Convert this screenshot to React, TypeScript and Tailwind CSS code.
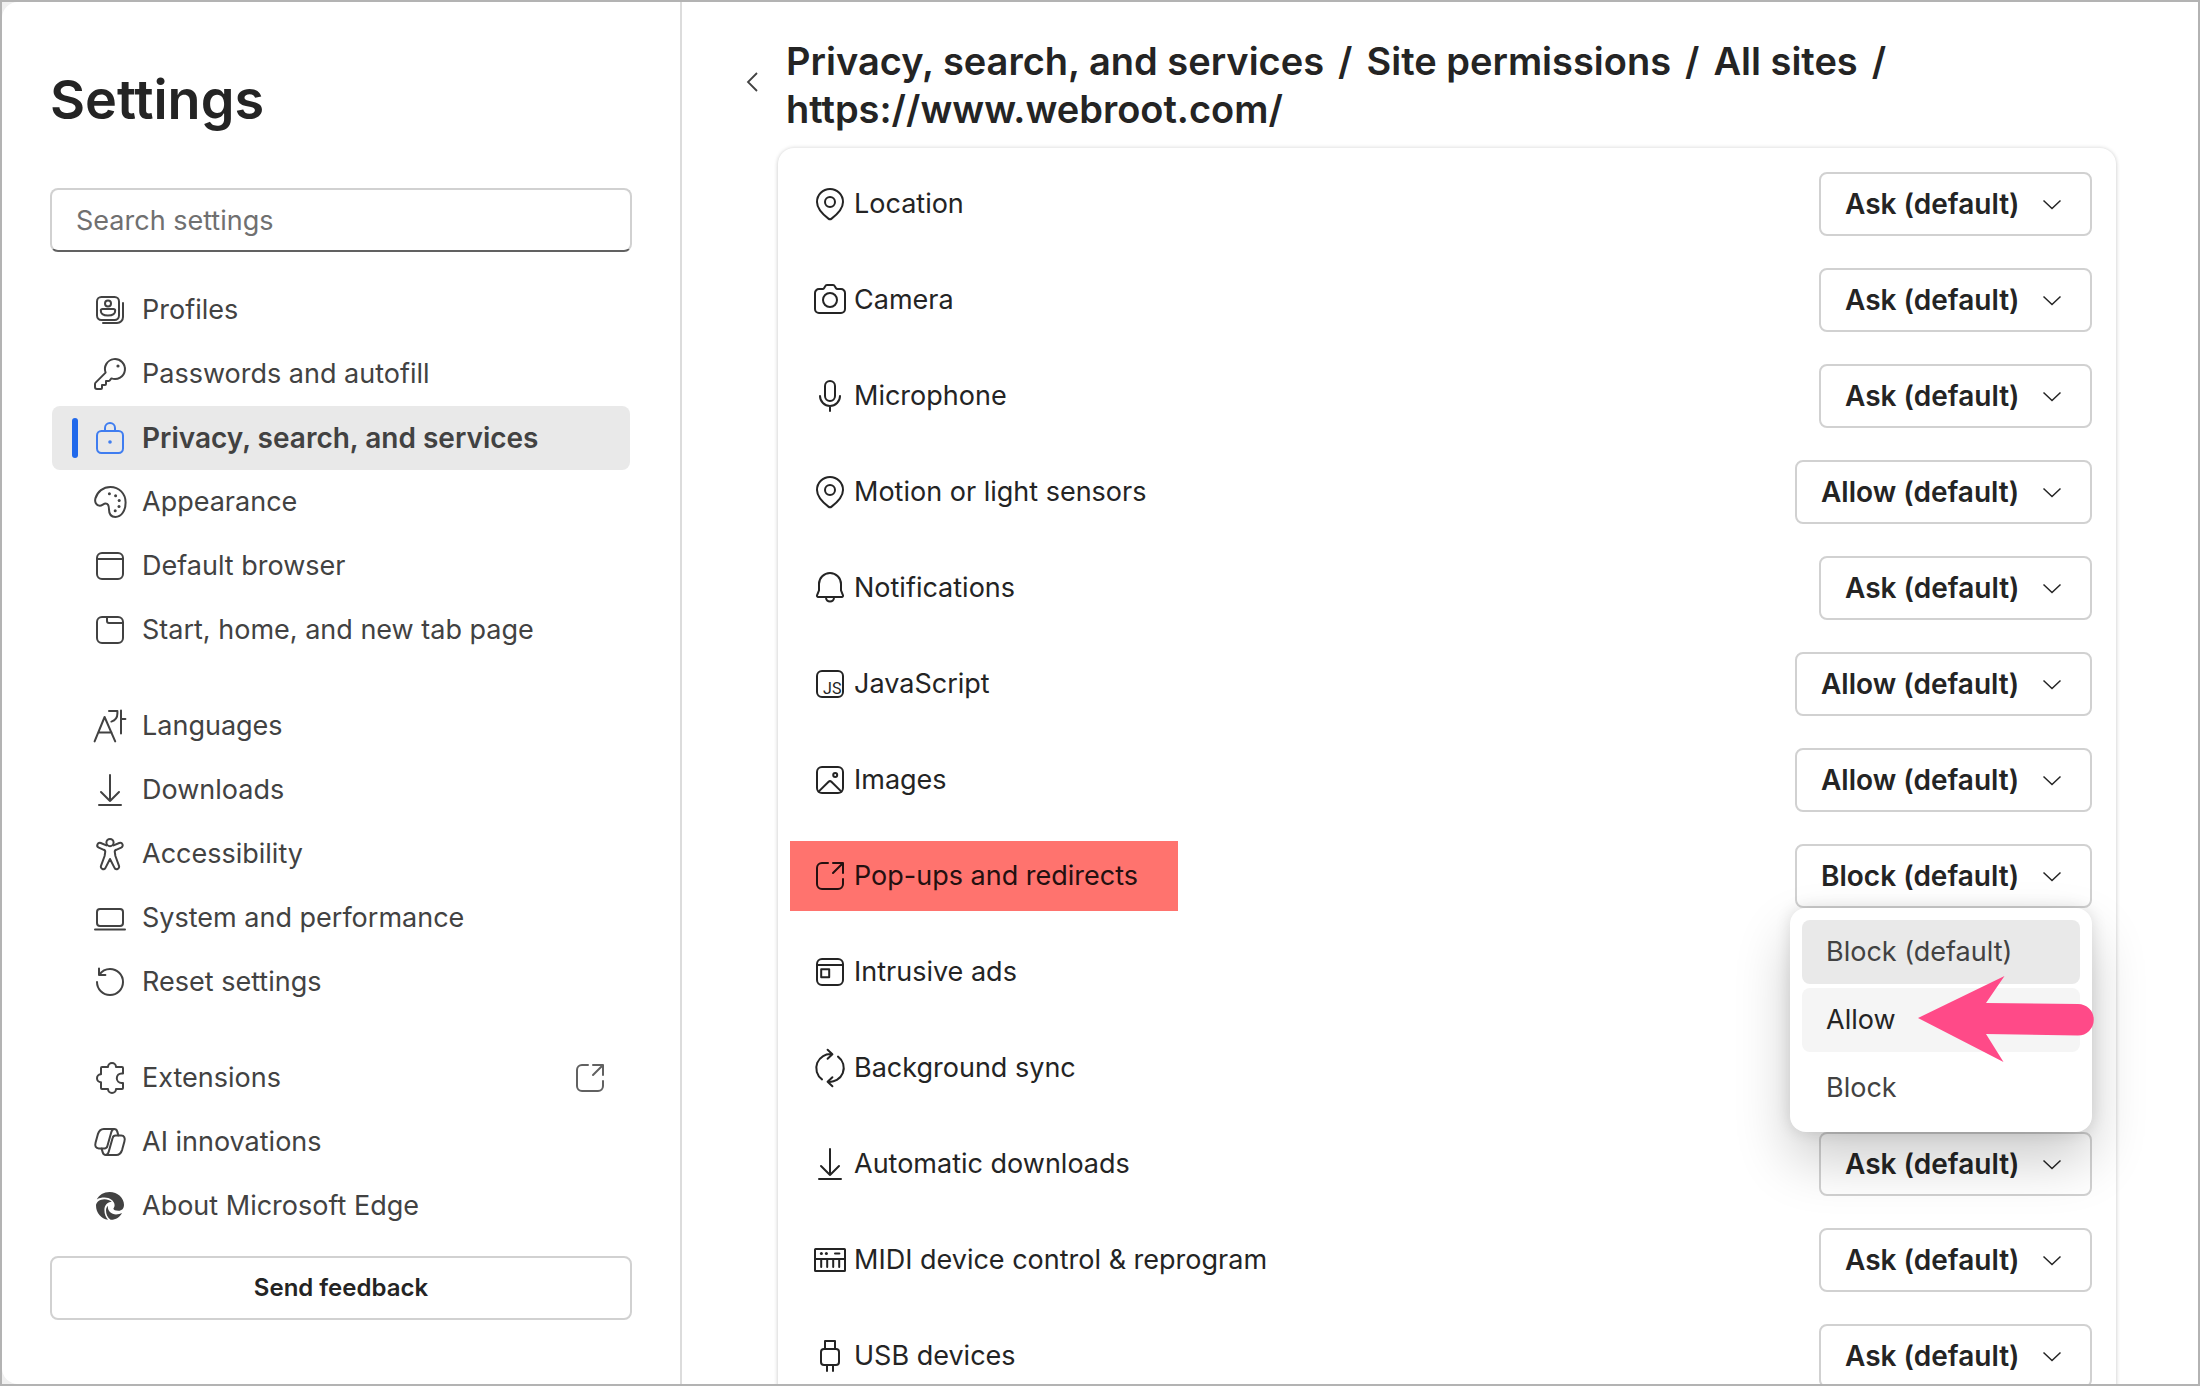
import { useState } from "react";
import type { ReactNode } from "react";

function Icon({ children, className = "" }: { children: ReactNode; className?: string }) {
  return (
    <svg
      aria-hidden="true"
      viewBox="0 0 20 20"
      className={`size-10 shrink-0 ${className}`}
      fill="none"
      stroke="currentColor"
      strokeWidth="1"
      strokeLinecap="round"
      strokeLinejoin="round"
    >
      {children}
    </svg>
  );
}

const frame = <rect x="3.5" y="3.5" width="13" height="13" rx="2.5" />;

const pin = (
  <>
    <path d="M10 2.5A6.5 6.5 0 0 0 3.5 9c0 3.4 2.7 6 5.7 8.3a1.3 1.3 0 0 0 1.6 0c3-2.3 5.7-4.9 5.7-8.3A6.5 6.5 0 0 0 10 2.5z" />
    <circle cx="10" cy="9" r="2.5" />
  </>
);

const openExternal = (
  <path d="M9 3.5H6A2.5 2.5 0 0 0 3.5 6v8A2.5 2.5 0 0 0 6 16.5h8a2.5 2.5 0 0 0 2.5-2.5v-2.5M11.5 3.5h5v5M16.5 3.5l-5 5" />
);

const download = <path d="M10 2.5v13M5.5 11l4.5 4.5 4.5-4.5M4.5 17.5h11" />;

const syncArrow = <path d="M6 15.7A7 7 0 0 1 11 3.1M8.8.9l2.4 2.2-2.4 2.3" />;

const ribbon = (
  <path d="M12.1 3.5H6.9C5.2 3.5 4.4 4.5 3.9 6.2L2.8 10.3c-.5 1.8.1 2.9 1.6 2.9h2.8c.8 0 1.3-.4 1.5-1.2l1.9-6.8c.3-1.1.8-1.7 1.5-1.7.8 0 1.3.4 1.5 1.2l.6 2" />
);

type NavItem = { label: string; icon: ReactNode; active?: boolean; external?: boolean };

const navGroups: NavItem[][] = [
  [
    {
      label: "Profiles",
      icon: (
        <>
          <rect x="3.5" y="3.5" width="11" height="11.5" rx="2.2" />
          <path d="M16.5 6.5v7a3 3 0 0 1-3 3H6.5" />
          <circle cx="9" cy="6.8" r="1.5" />
          <path d="M6.3 9.5h5.4a.9.9 0 0 1 .9.9c0 1.5-1.5 2.4-3.6 2.4s-3.6-.9-3.6-2.4a.9.9 0 0 1 .9-.9z" />
        </>
      ),
    },
    {
      label: "Passwords and autofill",
      icon: (
        <>
          <path d="M10.7 12.2A5 5 0 1 0 7.8 9.3L2.8 14.3a1 1 0 0 0-.3.7v1.5a1 1 0 0 0 1 1H5.5a.5.5 0 0 0 .5-.5v-1.5h1.5A.5.5 0 0 0 8 15v-1.5h1.3a.7.7 0 0 0 .5-.2z" />
          <circle cx="14" cy="6" r=".8" fill="currentColor" stroke="none" />
        </>
      ),
    },
    {
      label: "Privacy, search, and services",
      active: true,
      icon: (
        <>
          <rect x="3.5" y="6.5" width="13" height="11" rx="2.2" />
          <path d="M7.5 6.5V5a2.5 2.5 0 0 1 5 0v1.5" />
          <circle cx="10" cy="12" r=".9" fill="currentColor" stroke="none" />
        </>
      ),
    },
    {
      label: "Appearance",
      icon: (
        <>
          <path d="M2.7 8.2C3.7 4.8 6.6 2.5 10.2 2.5c4.3 0 7.6 3.3 7.6 7.7 0 4.1-2.1 7.3-5.1 7.3-2.4 0-3.2-1.9-3.2-3.7 0-1.4-.3-3-1.7-3-1.1 0-1.7 1.1-2.9 1.1-1.7 0-2.7-1.8-2.2-3.7z" />
          <g fill="currentColor" stroke="none">
            <circle cx="9.7" cy="5.9" r=".75" />
            <circle cx="12.8" cy="6.9" r=".75" />
            <circle cx="14.6" cy="9.2" r=".75" />
            <circle cx="14.5" cy="12.2" r=".75" />
            <circle cx="12.6" cy="14.4" r=".75" />
          </g>
        </>
      ),
    },
    {
      label: "Default browser",
      icon: (
        <>
          {frame}
          <path d="M3.5 6.5h13" />
        </>
      ),
    },
    {
      label: "Start, home, and new tab page",
      icon: (
        <>
          {frame}
          <path d="M8.5 3.5v2a1 1 0 0 0 1 1h7" />
        </>
      ),
    },
  ],
  [
    {
      label: "Languages",
      icon: (
        <path d="M2.3 17.7 7.3 5.5l5.3 12.2M4.1 13.3h6.7M9.5 2.5h4.2v1.3c0 1.9-1 3.4-3 4M15.5 2.3v11.5M15.5 6.5h2.2" />
      ),
    },
    { label: "Downloads", icon: download },
    {
      label: "Accessibility",
      icon: (
        <>
          <circle cx="10" cy="4.3" r="1.8" />
          <path d="M8.2 5.7 5.4 4.5a1.25 1.25 0 0 0-1 2.3l2.5 1.1c.5.2.8.7.7 1.2L7.3 11l-1.8 4.9a1.2 1.2 0 0 0 2.3.9L10 12.5l2.2 4.3a1.2 1.2 0 0 0 2.3-.9L12.7 11l-.3-1.9c-.1-.5.2-1 .7-1.2l2.5-1.1a1.25 1.25 0 0 0-1-2.3l-2.8 1.2" />
        </>
      ),
    },
    {
      label: "System and performance",
      icon: (
        <>
          <rect x="3.5" y="5.5" width="13" height="8.5" rx="1.5" />
          <path d="M2.5 15.7h15" />
        </>
      ),
    },
    {
      label: "Reset settings",
      icon: <path d="M3.5 10A6.5 6.5 0 1 0 10 3.5a6.5 6.5 0 0 0-5.3 2.8M4.5 3.3v3.2h3.2" />,
    },
  ],
  [
    {
      label: "Extensions",
      external: true,
      icon: (
        <path d="M6 4.5h3a2 2 0 0 1 4 0h3a.5.5 0 0 1 .5.5v2.7h-.7a2.4 2.4 0 0 0 0 4.8h.7V15a.5.5 0 0 1-.5.5h-3a2 2 0 0 1-4 0H6a.5.5 0 0 1-.5-.5v-2.9a2 2 0 0 1 0-4V5a.5.5 0 0 1 .5-.5z" />
      ),
    },
    {
      label: "AI innovations",
      icon: (
        <>
          {ribbon}
          <g transform="rotate(180 10 10)">{ribbon}</g>
        </>
      ),
    },
    {
      label: "About Microsoft Edge",
      icon: (
        <g fill="currentColor" stroke="none">
          <path d="M3.4 6.8C4.4 4.5 6.9 3 9.8 3 13.8 3 17 6 17 9.4c0 1.9-1 3-2.8 3-1.4 0-2.5-.4-2.5-1 0-.4.6-.8.6-1.8 0-2.1-2.5-3.8-5-3.8-1.5 0-2.9.3-3.9 1z" />
          <path d="M3 9.8c0-1.8 2-3.2 4.2-3.2 1.4 0 2.8.4 3.7 1.3C8.6 8 7.2 9.8 7.2 12c0 2 .7 3.7 1.8 4.9-3.4-.4-6-3.4-6-7.1z" />
          <path d="M9 9.9c-.5 2.6 1.8 4.3 4 4.3 1.2 0 2.2-.3 3-.7-1.1 2.1-3.2 3.5-5.7 3.4C8.8 15.7 8 14 8 12.2c0-.9.4-1.8 1-2.3z" />
        </g>
      ),
    },
  ],
];

type Permission = { label: string; value: string; icon: ReactNode; highlighted?: boolean; open?: boolean };

const permissions: Permission[] = [
  { label: "Location", value: "Ask (default)", icon: pin },
  {
    label: "Camera",
    value: "Ask (default)",
    icon: (
      <>
        <path d="M4.5 4.5h1.7a1 1 0 0 0 .9-.5l.5-.9a1 1 0 0 1 .9-.6h3a1 1 0 0 1 .9.6l.5.9a1 1 0 0 0 .9.5h1.7a2 2 0 0 1 2 2v8a2 2 0 0 1-2 2h-11a2 2 0 0 1-2-2v-8a2 2 0 0 1 2-2z" />
        <circle cx="10" cy="10" r="3.5" />
      </>
    ),
  },
  {
    label: "Microphone",
    value: "Ask (default)",
    icon: (
      <>
        <rect x="7.5" y="2.5" width="5" height="10" rx="2.5" />
        <path d="M5 10a5 5 0 0 0 10 0M10 15v2.5" />
      </>
    ),
  },
  { label: "Motion or light sensors", value: "Allow (default)", icon: pin },
  {
    label: "Notifications",
    value: "Ask (default)",
    icon: (
      <path d="M10 2.5A5.5 5.5 0 0 0 4.5 8v3.2l-1 2.5a.6.6 0 0 0 .6.8h11.8a.6.6 0 0 0 .6-.8l-1-2.5V8A5.5 5.5 0 0 0 10 2.5zM8 14.8a2 2 0 0 0 4 0" />
    ),
  },
  {
    label: "JavaScript",
    value: "Allow (default)",
    icon: (
      <>
        {frame}
        <text
          x="15.7"
          y="14.8"
          textAnchor="end"
          fontSize="8"
          fontFamily="Roboto, sans-serif"
          fill="currentColor"
          stroke="none"
        >
          JS
        </text>
      </>
    ),
  },
  {
    label: "Images",
    value: "Allow (default)",
    icon: (
      <>
        {frame}
        <circle cx="12.6" cy="7.5" r="1" />
        <path d="m4.3 15.8 5-4.9a1 1 0 0 1 1.4 0l5 4.9" />
      </>
    ),
  },
  {
    label: "Pop-ups and redirects",
    value: "Block (default)",
    icon: openExternal,
    highlighted: true,
    open: true,
  },
  {
    label: "Intrusive ads",
    value: "Block (default)",
    icon: (
      <>
        {frame}
        <path d="M3.5 6.5h13" />
        <rect x="5.6" y="8.6" width="4" height="4" />
      </>
    ),
  },
  {
    label: "Background sync",
    value: "Allow (default)",
    icon: (
      <>
        {syncArrow}
        <g transform="rotate(180 10 10)">{syncArrow}</g>
      </>
    ),
  },
  { label: "Automatic downloads", value: "Ask (default)", icon: download },
  {
    label: "MIDI device control & reprogram",
    value: "Ask (default)",
    icon: (
      <>
        <rect x="2.5" y="4.5" width="15" height="11" rx=".3" />
        <path d="M2.5 9.5h15M5.6 9.5v4M8.6 9.5v4M11.6 9.5v4M14.6 9.5v4M12.5 6.7h2.2" />
        <circle cx="5.7" cy="6.8" r=".75" fill="currentColor" stroke="none" />
        <circle cx="8.2" cy="6.8" r=".75" fill="currentColor" stroke="none" />
      </>
    ),
  },
  {
    label: "USB devices",
    value: "Ask (default)",
    icon: (
      <>
        <rect x="5.5" y="6.5" width="9" height="8" rx="1.5" />
        <path d="M7.5 6.5v-4h5v4M8.5 14.5v3M11.5 14.5v3" />
      </>
    ),
  },
];

function Sidebar() {
  return (
    <aside className="flex w-[680px] shrink-0 flex-col border-r-2 border-[#dcdcdc] px-12 pt-[62px]">
      <h1 className="text-[54px] leading-[72px] font-semibold text-[#242424]">Settings</h1>
      <input
        type="search"
        aria-label="Search settings"
        placeholder="Search settings"
        className="mt-[52px] h-16 w-full shrink-0 rounded-lg border-2 border-[#d1d1d1] border-b-[#616161] px-6 text-[27px] text-[#242424] placeholder:text-[#707070]"
      />
      <nav aria-label="Settings" className="mt-[26px] flex flex-col gap-8 px-0.5">
        {navGroups.map((group, i) => (
          <ul key={i}>
            {group.map((item) => (
              <li key={item.label}>
                <a
                  href="#"
                  aria-current={item.active ? "page" : undefined}
                  className={`flex h-16 items-center rounded-lg px-5 text-[#424242] ${
                    item.active ? "bg-[#e9e9e9] text-[28px] font-semibold" : "text-[27px]"
                  }`}
                >
                  <span className={`h-10 w-1.5 rounded-full ${item.active ? "bg-[#2169eb]" : ""}`} />
                  <Icon className={`ml-3 ${item.active ? "text-[#3f7df0]" : ""}`}>{item.icon}</Icon>
                  <span className="ml-3 flex-1 whitespace-nowrap">{item.label}</span>
                  {item.external && <Icon className="text-[#616161]">{openExternal}</Icon>}
                </a>
              </li>
            ))}
          </ul>
        ))}
      </nav>
      <button
        type="button"
        className="mt-[18px] h-16 w-full shrink-0 rounded-lg border-2 border-[#d1d1d1] bg-white text-2xl font-semibold text-[#242424]"
      >
        Send feedback
      </button>
    </aside>
  );
}

function OptionsMenu() {
  const options = [
    { label: "Block (default)", style: "bg-[#e9e9e9] text-[#424242]", selected: true },
    { label: "Allow", style: "bg-[#f5f5f5] text-[#242424]", selected: false },
    { label: "Block", style: "text-[#424242]", selected: false },
  ];
  return (
    <div className="absolute top-full right-0 z-10 w-[302px] rounded-2xl bg-white p-3 shadow-[0_0_16px_rgba(0,0,0,0.12),0_28px_56px_rgba(0,0,0,0.2)]">
      <ul role="listbox" aria-label="Pop-ups and redirects options" className="flex flex-col gap-1">
        {options.map((option) => (
          <li
            key={option.label}
            role="option"
            aria-selected={option.selected}
            className={`flex h-16 items-center rounded-lg px-6 text-[27px] ${option.style}`}
          >
            {option.label}
          </li>
        ))}
      </ul>
      <svg
        aria-hidden="true"
        viewBox="0 0 176 86"
        className="absolute top-[68px] -right-0.5 h-[86px] w-44"
        fill="#ff4a88"
      >
        <path d="M0 42 86.5 0 68 27l92 1a15.7 15.7 0 0 1 0 31.500L68 58l17.500 28z" />
      </svg>
    </div>
  );
}

function PermissionRow({ label, value, icon, highlighted, open }: Permission) {
  const [selected, setSelected] = useState(value);
  const id = label.toLowerCase().replace(/[^a-z]+/g, "-");
  return (
    <li className="flex h-16 items-center justify-between">
      <label
        htmlFor={id}
        className={`flex h-[70px] items-center gap-1 pr-10 pl-5 text-[27px] whitespace-nowrap ${
          highlighted ? "bg-[#ff736e] text-[#241010]" : "text-[#242424]"
        }`}
      >
        <Icon>{icon}</Icon>
        {label}
      </label>
      <div className="relative">
        <select
          id={id}
          value={selected}
          onChange={(event) => setSelected(event.target.value)}
          className="h-16 appearance-none rounded-lg border-2 border-[#d1d1d1] bg-white pr-[70px] pl-6 text-[28px] font-semibold text-[#242424]"
        >
          <option>{value}</option>
          <option>Allow</option>
          <option>Block</option>
        </select>
        <svg
          aria-hidden="true"
          viewBox="0 0 24 24"
          className="pointer-events-none absolute top-5 right-7 size-6"
          fill="none"
          stroke="#242424"
          strokeWidth="1.5"
        >
          <path d="m3.500 8.500 8.500 8 8.500-8" />
        </svg>
        {open && <OptionsMenu />}
      </div>
    </li>
  );
}

export default function App() {
  return (
    <div className="h-screen overflow-hidden border-2 border-[#b3b3b3] bg-[#f0f0f0] font-['Inter',sans-serif]">
      <div className="flex h-full rounded-l-2xl bg-white">
        <Sidebar />
        <main className="h-full min-w-0 flex-1 overflow-hidden pr-[82px] pl-12">
          <header className="flex items-start gap-3 pt-[35px]">
            <button type="button" aria-label="Back" className="flex h-[90px] w-11 shrink-0 items-center justify-center">
              <svg aria-hidden="true" viewBox="0 0 12 20" className="h-5 w-3" fill="none" stroke="#424242" strokeWidth="1.8">
                <path d="M11 1 2 10l9 9" />
              </svg>
            </button>
            <h2 className="text-[38px] leading-[48px] font-semibold text-[#242424]">
              <a href="#">Privacy, search, and services</a>
              <span className="mx-3.5">/</span>
              <a href="#">Site permissions</a>
              <span className="mx-3.5">/</span>
              <a href="#">All sites</a>
              <span className="mx-3.5">/</span> <span>https://www.webroot.com/</span>
            </h2>
          </header>
          <ul className="mt-[15px] ml-12 flex flex-col gap-8 rounded-2xl bg-white py-6 pr-6 pl-3 shadow-[0_0_4px_rgba(0,0,0,0.16),0_2px_4px_rgba(0,0,0,0.08)]">
            {permissions.map((permission) => (
              <PermissionRow key={permission.label} {...permission} />
            ))}
          </ul>
        </main>
      </div>
    </div>
  );
}
